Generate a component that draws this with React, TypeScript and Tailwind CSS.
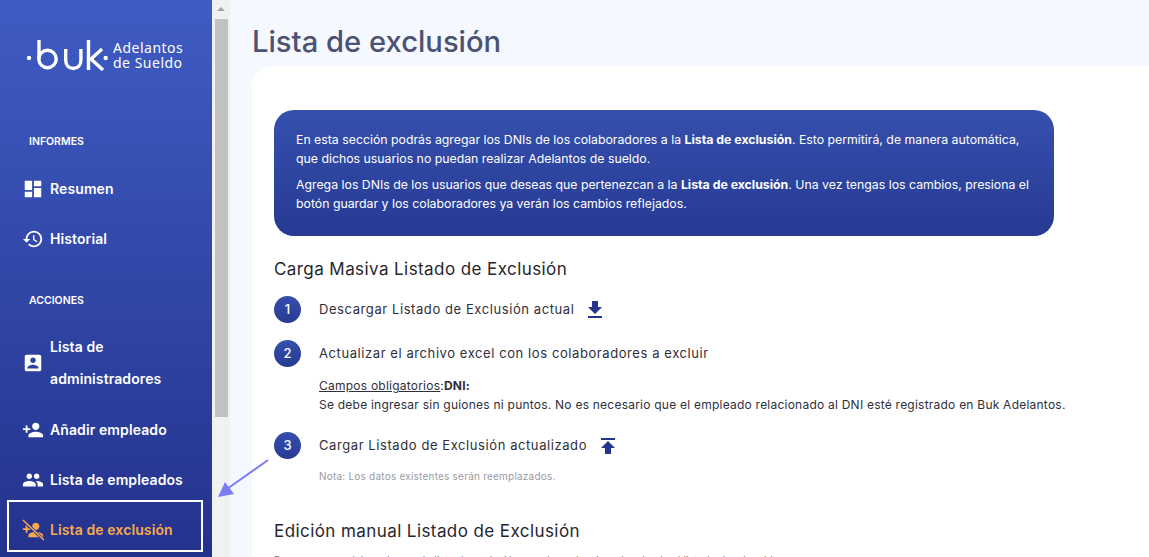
import React from "react";

const P = {
  dashboard: "M3 13h8V3H3v10zm0 8h8v-6H3v6zm10 0h8V11h-8v10zm0-18v6h8V3h-8z",
  history: "M13 3c-4.97 0-9 4.03-9 9H1l3.89 3.89.07.14L9 12H6c0-3.87 3.13-7 7-7s7 3.13 7 7-3.13 7-7 7c-1.93 0-3.68-.79-4.94-2.06l-1.42 1.42C8.27 19.99 10.51 21 13 21c4.97 0 9-4.03 9-9s-4.03-9-9-9zm-1 5v5l4.28 2.54.72-1.21-3.5-2.08V8H12z",
  box: "M3 5v14c0 1.1.89 2 2 2h14c1.1 0 2-.9 2-2V5c0-1.1-.9-2-2-2H5c-1.11 0-2 .9-2 2zm12 4c0 1.66-1.34 3-3 3s-3-1.34-3-3 1.34-3 3-3 3 1.34 3 3zm-9 8c0-2 4-3.1 6-3.1s6 1.1 6 3.1v1H6v-1z",
  add: "M15 12c2.21 0 4-1.79 4-4s-1.79-4-4-4-4 1.79-4 4 1.79 4 4 4zm-9-2V7H4v3H1v2h3v3h2v-3h3v-2H6zm9 4c-2.67 0-8 1.34-8 4v2h16v-2c0-2.66-5.33-4-8-4z",
  people: "M16 11c1.66 0 2.99-1.34 2.99-3S17.66 5 16 5c-1.66 0-3 1.34-3 3s1.34 3 3 3zm-8 0c1.66 0 2.99-1.34 2.99-3S9.66 5 8 5C6.34 5 5 6.34 5 8s1.34 3 3 3zm0 2c-2.33 0-7 1.17-7 3.5V19h14v-2.5c0-2.33-4.67-3.5-7-3.5zm8 0c-.29 0-.62.02-.97.05 1.16.84 1.97 1.97 1.97 3.45V19h6v-2.5c0-2.33-4.67-3.5-7-3.5z",
  download: "M19 9h-4V3H9v6H5l7 7 7-7zM5 18v2h14v-2H5z",
  upload: "M5 4v2h14V4H5zm0 10h4v6h6v-6h4l-7-7-7 7z",
};

function Icon({ d, className }: { d: string; className: string }) {
  return (
    <svg viewBox="0 0 24 24" fill="currentColor" className={className}>
      <path d={d} />
    </svg>
  );
}

function NavItem({ d, label, className = "" }: { d: string; label: React.ReactNode; className?: string }) {
  return (
    <div className={`flex items-center gap-[6px] pl-[22px] text-[14px] font-semibold leading-[32px] tracking-[0.1px] text-white ${className}`}>
      <Icon d={d} className="h-[22px] w-[22px] shrink-0" />
      <span>{label}</span>
    </div>
  );
}

function Step({ n, children }: { n: number; children: React.ReactNode }) {
  return (
    <div className="flex h-[27px] items-center">
      <div className="flex h-[27px] w-[27px] shrink-0 items-center justify-center rounded-full bg-gradient-to-b from-[#3550ad] to-[#273a94] text-[13px] font-medium text-white">
        {n}
      </div>
      <div className="ml-[18px] flex items-center text-[13px] tracking-[0.58px] text-[#2f2f3a]">{children}</div>
    </div>
  );
}

export default function App() {
  return (
    <div className="flex h-[557px] w-[1149px] overflow-hidden bg-[#f5f8ff] font-['Inter',sans-serif]">
      <aside className="flex h-full w-[212px] shrink-0 flex-col bg-gradient-to-b from-[#3f5cc4] to-[#24328c] pt-[38px]">
        <div className="flex h-[34px] items-center pl-[25px] text-white">
          <svg width="84" height="34" viewBox="0 0 84 34" fill="none" stroke="currentColor" strokeWidth="3.4" className="shrink-0">
            <circle cx="4" cy="20" r="2.2" fill="currentColor" stroke="none" />
            <path d="M14 2v19" />
            <circle cx="22.5" cy="21" r="8.7" />
            <path d="M40.7 11v11c0 5 3 8.5 7.6 8.5s7.6-3.5 7.6-8.5V11" />
            <path d="M63.5 2v30M77 11 66 21l12 11" />
            <circle cx="80.7" cy="20" r="2.2" fill="currentColor" stroke="none" />
          </svg>
          <div className="ml-[4px] font-['Noto_Sans',sans-serif] text-[14px] leading-[15px] tracking-[0.5px]">
            Adelantos
            <br />
            de Sueldo
          </div>
        </div>
        <div className="mt-[62px] pl-[29px] text-[10.5px] font-semibold leading-[16px] text-white">INFORMES</div>
        <NavItem d={P.dashboard} label="Resumen" className="mt-[23px]" />
        <NavItem d={P.history} label="Historial" className="mt-[18px]" />
        <div className="mt-[38px] pl-[29px] text-[10.5px] font-semibold leading-[16px] text-white">ACCIONES</div>
        <NavItem
          d={P.box}
          label={
            <>
              Lista de
              <br />
              administradores
            </>
          }
          className="mt-[22px]"
        />
        <NavItem d={P.add} label="Añadir empleado" className="mt-[19px]" />
        <NavItem d={P.people} label="Lista de empleados" className="mt-[18px]" />
        <div className="relative">
          <div className="mt-[18px] flex items-center gap-[6px] pl-[22px] text-[14px] font-semibold leading-[32px] tracking-[0.1px] text-[#f9a94a]">
            <svg viewBox="0 0 24 24" fill="currentColor" className="h-[22px] w-[22px] shrink-0">
              <path d={P.add} />
              <path d="M1 1 24 23" stroke="#2a3a96" strokeWidth="3.4" />
              <path d="M1 1 24 23" stroke="currentColor" strokeWidth="1.6" />
            </svg>
            <span>Lista de exclusión</span>
          </div>
          <div className="absolute left-[7px] top-[4px] h-[52px] w-[196px] border-[2.5px] border-white" />
        </div>
      </aside>
      <div className="flex h-full w-[18px] shrink-0 flex-col items-center bg-[#f1f1f1] pt-[7px]">
        <div className="h-0 w-0 border-x-[4px] border-b-[4px] border-x-transparent border-b-[#a3a3a3]" />
        <div className="mt-[8px] h-[398px] w-[13px] bg-[#c1c1c1]" />
      </div>
      <main className="relative min-w-0 flex-1 pl-[22px] pt-[23px]">
        <h1 className="text-[29.2px] font-medium leading-[37px] text-[#4b5273]">Lista de exclusión</h1>
        <div className="mt-[6px] h-[600px] rounded-tl-[20px] bg-white pl-[22px] pt-[44px]">
          <div className="h-[126px] w-[780px] rounded-[20px] bg-gradient-to-b from-[#3550ad] to-[#273a94] px-[22px] pt-[20px] text-[12.3px] leading-[19px] text-white">
            <p>
              En esta sección podrás agregar los DNIs de los colaboradores a la <b>Lista de exclusión</b>. Esto permitirá, de manera automática, que dichos usuarios no puedan realizar Adelantos de sueldo.
            </p>
            <p className="mt-[7px]">
              Agrega los DNIs de los usuarios que deseas que pertenezcan a la <b>Lista de exclusión</b>. Una vez tengas los cambios, presiona el botón guardar y los colaboradores ya verán los cambios reflejados.
            </p>
          </div>
          <h2 className="mt-[21px] text-[17px] leading-[24px] tracking-[0.42px] text-[#26262e]">Carga Masiva Listado de Exclusión</h2>
          <div className="mt-[15px]">
            <Step n={1}>
              Descargar Listado de Exclusión actual
              <Icon d={P.download} className="ml-[9px] h-[24px] w-[24px] text-[#25348f]" />
            </Step>
          </div>
          <div className="mt-[17px]">
            <Step n={2}>Actualizar el archivo excel con los colaboradores a excluir</Step>
          </div>
          <div className="ml-[45px] mt-[9px] text-[12px] leading-[19px] tracking-[0.23px] text-[#2f2f3a]">
            <div>
              <span className="underline">Campos obligatorios</span>:<b>DNI:</b>
            </div>
            <div>Se debe ingresar sin guiones ni puntos. No es necesario que el empleado relacionado al DNI esté registrado en Buk Adelantos.</div>
          </div>
          <div className="mt-[18px]">
            <Step n={3}>
              Cargar Listado de Exclusión actualizado
              <Icon d={P.upload} className="ml-[9px] h-[24px] w-[24px] text-[#25348f]" />
            </Step>
          </div>
          <div className="ml-[45px] mt-[9px] text-[10px] leading-[16px] tracking-[0.22px] text-[#9a9aa5]">Nota: Los datos existentes serán reemplazados.</div>
          <h2 className="mt-[35px] text-[17px] leading-[24px] tracking-[0.42px] text-[#26262e]">Edición manual Listado de Exclusión</h2>
          <div className="mt-[9px] text-[10px] leading-[16px] tracking-[0.2px] text-[#7a7a85]">Para agregar colaboradores a la lista de exclusión, puedes seleccionarlos desde el listado desplegable.</div>
        </div>
      </main>
      <svg className="pointer-events-none absolute left-[215px] top-[458px] h-[42px] w-[56px]" viewBox="0 0 56 42" fill="none">
        <path d="M53 2 12 31" stroke="#7c7cf5" strokeWidth="2" />
        <path d="M3 39 10 24 19 36z" fill="#7c7cf5" />
      </svg>
    </div>
  );
}
